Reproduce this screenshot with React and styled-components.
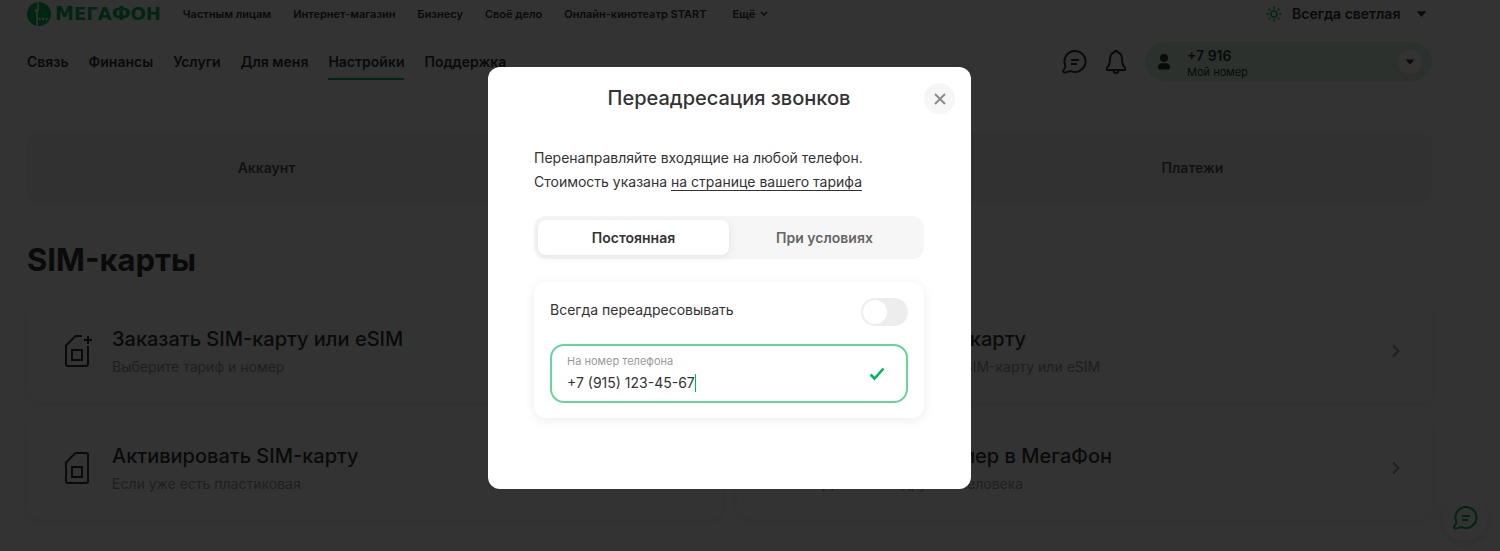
import React, { useState } from "react";
import styled, { createGlobalStyle } from "styled-components";

const topLinks = [
    "Частным лицам",
    "Интернет-магазин",
    "Бизнесу",
    "Своё дело",
    "Онлайн-кинотеатр START",
];

const navLinks = [
    "Связь",
    "Финансы",
    "Услуги",
    "Для меня",
    "Настройки",
    "Поддержка",
];

const sections = ["Аккаунт", "Платежи"];

const simCards = [
    {
        title: "Заказать SIM-карту или eSIM",
        text: "Выберите тариф и номер",
        plus: true,
    },
    {
        title: "Заменить SIM-карту",
        text: "Заменим на другую SIM-карту или eSIM",
    },
    {
        title: "Активировать SIM-карту",
        text: "Если уже есть пластиковая",
    },
    {
        title: "Перенести номер в МегаФон",
        text: "Для себя и другого человека",
    },
];

const LogoMark = () => (
    <svg width="24" height="24" viewBox="0 0 24 24" aria-hidden="true">
        <circle cx="12" cy="12" r="12" fill="#00b956" />
        <path
            d="M11 0v7.500c0 1.500-1 2-1 3.500V24"
            fill="none"
            stroke="#fff"
            strokeWidth="1.500"
        />
        <circle cx="9" cy="8.500" r="1.500" fill="#fff" />
        <circle cx="12.500" cy="17" r="1.200" fill="#fff" />
        <circle cx="16" cy="17" r="1.200" fill="#fff" />
        <circle cx="19.500" cy="17" r="1.200" fill="#fff" />
    </svg>
);

const ChatIcon = () => (
    <svg
        width="26"
        height="26"
        viewBox="0 0 26 26"
        fill="none"
        stroke="currentColor"
        strokeWidth="2"
        strokeLinejoin="round"
        aria-hidden="true"
    >
        <path d="M4.200 16.300c.6 2-.3 3-1.300 4.300-1.400 1.700-.9 3.100 1.100 3 2-.1 3.300-1.500 5.800-1.500A10.500 10.500 0 1 0 4.200 16.300Z" />
        <path d="M10 11h8M10 15h6" />
    </svg>
);

const BellIcon = () => (
    <svg
        width="22"
        height="26"
        viewBox="0 0 22 26"
        fill="none"
        stroke="currentColor"
        strokeWidth="2"
        strokeLinejoin="round"
        aria-hidden="true"
    >
        <path d="M9.500 3.200a1.500 1.500 0 0 1 3 0c3.200 1 4.500 3.500 4.500 6.800 0 5 .8 7 3 8.500V21H2v-2.500C4.200 17 5 15 5 10c0-3.300 1.300-5.800 4.500-6.800Z" />
        <path d="M8.500 21.500a2.500 2.500 0 0 0 5 0" />
    </svg>
);

const UserIcon = () => (
    <svg width="12" height="16" viewBox="0 0 12 16" aria-hidden="true">
        <circle cx="6" cy="4" r="4" fill="#333" />
        <path
            d="M3.500 9.200h5C10.500 9.200 12 10.800 12 13c0 2-.6 2.500-2 2.500H2c-1.400 0-2-.5-2-2.500 0-2.200 1.500-3.800 3.500-3.800Z"
            fill="#333"
        />
    </svg>
);

const SunIcon = () => (
    <svg
        width="16"
        height="16"
        viewBox="0 0 16 16"
        fill="none"
        stroke="#00b956"
        strokeWidth="1.500"
        aria-hidden="true"
    >
        <circle cx="8" cy="8" r="3" />
        <path
            d="M8 1v1.500M8 13.500V15M1 8h1.500M13.500 8H15M3 3l1 1M12 12l1 1M3 13l1-1M12 4l1-1"
            strokeLinecap="round"
        />
    </svg>
);

const TriangleIcon = ({ width = 9 }) => (
    <svg width={width} height="6" viewBox="0 0 10 6" aria-hidden="true">
        <path d="M1 0h8c.7 0 1 .6.500 1.100L5.700 5.400c-.4.500-1 .5-1.400 0L.5 1.100C0 .6.300 0 1 0Z" fill="#333" />
    </svg>
);

const SimIcon = ({ plus }) => (
    <svg
        width="30"
        height="34"
        viewBox="0 0 30 34"
        fill="none"
        stroke="#333"
        strokeWidth="2"
        strokeLinejoin="round"
        aria-hidden="true"
    >
        {plus ? (
            <>
                <path d="M18 2h-6.500L2 11.500V30a2 2 0 0 0 2 2h18a2 2 0 0 0 2-2V12" />
                <path d="M20 6h8M24 2v8" />
            </>
        ) : (
            <path d="M11.500 2H22a2 2 0 0 1 2 2v26a2 2 0 0 1-2 2H4a2 2 0 0 1-2-2V11.500Z" />
        )}
        <path d="M8 16h10v10H8Z" strokeLinejoin="miter" />
    </svg>
);

const App = () => {
    const [mode, setMode] = useState("always");
    const [enabled, setEnabled] = useState(false);
    const [phone, setPhone] = useState("+7 (915) 123-45-67");

    return (
        <>
            <GlobalStyle />
            <Page>
                <TopBar>
                    <Logo href="#">
                        <LogoMark />
                        <LogoText>
                            М<small>ЕГА</small>Ф<small>ОН</small>
                        </LogoText>
                    </Logo>
                    <TopMenu>
                        {topLinks.map((link) => (
                            <a key={link} href="#">
                                {link}
                            </a>
                        ))}
                        <MoreButton type="button">
                            Ещё
                            <svg width="8" height="5" viewBox="0 0 8 5" aria-hidden="true">
                                <path d="m1 1 3 3 3-3" fill="none" stroke="#333" strokeWidth="1.500" />
                            </svg>
                        </MoreButton>
                    </TopMenu>
                    <ThemePicker>
                        <SunIcon />
                        <ThemeSelect aria-label="Тема">
                            <option>Всегда светлая</option>
                        </ThemeSelect>
                        <TriangleIcon />
                    </ThemePicker>
                </TopBar>
                <NavBar>
                    <Nav>
                        {navLinks.map((link) => (
                            <NavLink key={link} href="#" $active={link === "Настройки"}>
                                {link}
                            </NavLink>
                        ))}
                    </Nav>
                    <IconButton type="button" aria-label="Чат">
                        <ChatIcon />
                    </IconButton>
                    <IconButton type="button" aria-label="Уведомления">
                        <BellIcon />
                    </IconButton>
                    <Account type="button">
                        <UserIcon />
                        <AccountText>
                            <AccountNumber>+7 916</AccountNumber>
                            <AccountName>Мой номер</AccountName>
                        </AccountText>
                        <AccountArrow>
                            <TriangleIcon width={8} />
                        </AccountArrow>
                    </Account>
                </NavBar>
                <Sections>
                    {sections.map((section) => (
                        <SectionTab key={section} href="#">
                            {section}
                        </SectionTab>
                    ))}
                </Sections>
                <Heading>SIM-карты</Heading>
                <Cards>
                    {simCards.map((card) => (
                        <Card key={card.title} href="#">
                            <SimIcon plus={card.plus} />
                            <CardBody>
                                <CardTitle>{card.title}</CardTitle>
                                <CardText>{card.text}</CardText>
                            </CardBody>
                            <svg width="8" height="14" viewBox="0 0 8 14" aria-hidden="true">
                                <path d="m1 1.500 5.500 5.500L1 12.500" fill="none" stroke="#999" strokeWidth="2" />
                            </svg>
                        </Card>
                    ))}
                </Cards>
            </Page>
            <ChatButton type="button" aria-label="Написать в чат">
                <ChatIcon />
            </ChatButton>
            <Overlay>
                <Modal role="dialog" aria-modal="true" aria-labelledby="modal-title">
                    <ModalHeader>
                        <ModalTitle id="modal-title">Переадресация звонков</ModalTitle>
                        <CloseButton type="button" aria-label="Закрыть">
                            <svg width="12" height="12" viewBox="0 0 12 12" aria-hidden="true">
                                <path d="m1 1 10 10M11 1 1 11" stroke="#8c8c8c" strokeWidth="2" />
                            </svg>
                        </CloseButton>
                    </ModalHeader>
                    <Description>
                        Перенаправляйте входящие на любой телефон.
                        <br />
                        Стоимость указана <a href="#">на странице вашего тарифа</a>
                    </Description>
                    <Segments>
                        <Segment
                            type="button"
                            $active={mode === "always"}
                            onClick={() => setMode("always")}
                        >
                            Постоянная
                        </Segment>
                        <Segment
                            type="button"
                            $active={mode === "conditional"}
                            onClick={() => setMode("conditional")}
                        >
                            При условиях
                        </Segment>
                    </Segments>
                    <Panel>
                        <SwitchRow>
                            <label htmlFor="forwarding">Всегда переадресовывать</label>
                            <Switch
                                id="forwarding"
                                type="checkbox"
                                checked={enabled}
                                onChange={(e) => setEnabled(e.target.checked)}
                            />
                        </SwitchRow>
                        <Field>
                            <FieldBody>
                                <FieldLabel htmlFor="phone">На номер телефона</FieldLabel>
                                <FieldValue>
                                    <PhoneInput
                                        id="phone"
                                        type="tel"
                                        value={phone}
                                        onChange={(e) => setPhone(e.target.value)}
                                    />
                                    <Caret />
                                </FieldValue>
                            </FieldBody>
                            <svg width="16" height="14" viewBox="0 0 16 14" aria-hidden="true">
                                <path d="m1.500 7.500 4 4L14.500 1.500" fill="none" stroke="#00b956" strokeWidth="2.600" />
                            </svg>
                        </Field>
                    </Panel>
                </Modal>
            </Overlay>
        </>
    );
};

const GlobalStyle = createGlobalStyle`
    * {
        box-sizing: border-box;
    }

    body {
        margin: 0;
        background-color: #ffffff;
        color: #333333;
        font-family: Inter, "Liberation Sans", sans-serif;
        font-size: 14px;
    }

    button,
    input,
    select {
        font: inherit;
        color: inherit;
    }

    button {
        border: none;
        background: none;
        padding: 0;
        cursor: pointer;
    }

    a {
        color: inherit;
        text-decoration: none;
    }
`;

const Page = styled.div`
    padding: 0 68px 31px 27px;
`;

const TopBar = styled.header`
    display: flex;
    align-items: center;
    height: 27px;
`;

const Logo = styled.a`
    display: flex;
    align-items: center;
    column-gap: 4px;
    margin-right: 22px;
`;

const LogoText = styled.span`
    font-family: "DejaVu Sans", sans-serif;
    font-size: 19px;
    font-weight: 700;
    line-height: 24px;
    color: #00b956;

    small {
        font-size: 18px;
    }
`;

const TopMenu = styled.nav`
    display: flex;
    align-items: center;
    column-gap: 22px;
    flex: 1;
    font-size: 11px;
    font-weight: 600;
    line-height: 16px;
    white-space: nowrap;
`;

const MoreButton = styled.button`
    display: flex;
    align-items: center;
    column-gap: 5px;
    margin-left: 4px;
`;

const ThemePicker = styled.div`
    display: flex;
    align-items: center;
    padding-right: 6px;
`;

const ThemeSelect = styled.select`
    appearance: none;
    border: none;
    background: none;
    padding: 0 16px 0 10px;
    font-size: 14px;
    font-weight: 600;
    line-height: 20px;
`;

const NavBar = styled.div`
    display: flex;
    align-items: center;
    height: 39px;
    margin-top: 15px;
`;

const Nav = styled.nav`
    display: flex;
    column-gap: 20px;
    flex: 1;
`;

const NavLink = styled.a`
    padding: 6px 0;
    border: solid transparent;
    border-width: 2px 0;
    border-bottom-color: ${(props) => (props.$active ? "#00b956" : "transparent")};
    font-size: 14px;
    font-weight: 600;
    line-height: 20px;
`;

const IconButton = styled.button`
    display: flex;
    margin-right: 18px;
`;

const Account = styled.button`
    display: flex;
    align-items: center;
    width: 287px;
    height: 39px;
    padding: 0 10px 0 13px;
    border-radius: 20px;
    background-color: #d9f5e5;
    text-align: left;
`;

const AccountText = styled.span`
    display: flex;
    flex-direction: column;
    flex: 1;
    margin-left: 17px;
    padding-top: 4px;
`;

const AccountNumber = styled.span`
    font-size: 14px;
    font-weight: 600;
    line-height: 16px;
`;

const AccountName = styled.span`
    font-size: 11px;
    line-height: 16px;
`;

const AccountArrow = styled.span`
    display: flex;
    align-items: center;
    justify-content: center;
    width: 24px;
    height: 24px;
    border-radius: 50%;
    background-color: #ffffff;
`;

const Sections = styled.nav`
    display: grid;
    grid-template-columns: repeat(3, 1fr);
    margin-top: 51px;
    padding: 8px;
    border-radius: 12px;
    background-color: #f6f6f6;
`;

const SectionTab = styled.a`
    font-size: 14px;
    font-weight: 600;
    line-height: 55px;
    text-align: center;
    color: #595959;

    &:last-child {
        grid-column: 3;
    }
`;

const Heading = styled.h2`
    margin: 38px 0 21px;
    font-size: 31px;
    font-weight: 700;
    line-height: 38px;
`;

const Cards = styled.div`
    display: grid;
    grid-template-columns: repeat(2, 1fr);
    gap: 15px;
`;

const Card = styled.a`
    display: flex;
    align-items: center;
    height: 102px;
    padding: 0 32px 0 37px;
    border-radius: 12px;
    background-color: #ffffff;
    box-shadow: 0 2px 12px #00000014;
`;

const CardBody = styled.div`
    flex: 1;
    margin-left: 18px;
    padding-top: 2px;
`;

const CardTitle = styled.h3`
    margin: 0;
    font-size: 20px;
    font-weight: 500;
    line-height: 28px;
`;

const CardText = styled.p`
    margin: 2px 0 0;
    font-size: 14px;
    line-height: 24px;
    color: #999999;
`;

const ChatButton = styled.button`
    position: fixed;
    right: 12px;
    bottom: 10px;
    display: flex;
    align-items: center;
    justify-content: center;
    width: 46px;
    height: 46px;
    border-radius: 50%;
    background-color: #ffffff;
    box-shadow: 0 2px 8px #00000020;
    color: #00b956;
`;

const Overlay = styled.div`
    position: fixed;
    inset: 0;
    display: flex;
    align-items: flex-start;
    justify-content: center;
    padding: 67px 68px 0 27px;
    overflow-y: auto;
    background-color: rgba(0, 0, 0, 0.8);
`;

const Modal = styled.div`
    width: 483px;
    padding: 16px 47px 71px 46px;
    border-radius: 12px;
    background-color: #ffffff;
`;

const ModalHeader = styled.div`
    position: relative;
    display: flex;
    justify-content: center;
`;

const ModalTitle = styled.h1`
    margin: 0;
    font-size: 20px;
    font-weight: 500;
    line-height: 31px;
`;

const CloseButton = styled.button`
    position: absolute;
    top: 0;
    right: -31px;
    display: flex;
    align-items: center;
    justify-content: center;
    width: 31px;
    height: 31px;
    border-radius: 50%;
    background-color: #f6f6f6;
`;

const Description = styled.p`
    margin: 32px 0 22px;
    font-size: 14px;
    line-height: 24px;
    white-space: nowrap;

    a {
        border-bottom: 1px solid #333333;
    }
`;

const Segments = styled.div`
    display: grid;
    grid-template-columns: repeat(2, 1fr);
    padding: 4px;
    border-radius: 12px;
    background-color: #f6f6f6;
`;

const Segment = styled.button`
    border-radius: 8px;
    background-color: ${(props) => (props.$active ? "#ffffff" : "transparent")};
    box-shadow: ${(props) => (props.$active ? "0 2px 8px #00000014" : "none")};
    color: ${(props) => (props.$active ? "#333333" : "#666666")};
    font-size: 14px;
    font-weight: 600;
    line-height: 35px;
`;

const Panel = styled.div`
    margin-top: 23px;
    padding: 16px 16px 15px;
    border-radius: 12px;
    box-shadow: 0 2px 12px #00000014;
`;

const SwitchRow = styled.div`
    display: flex;
    align-items: flex-start;
    justify-content: space-between;
    margin-bottom: 18px;
    font-size: 14px;
    line-height: 24px;
`;

const Switch = styled.input`
    appearance: none;
    display: flex;
    width: 47px;
    height: 28px;
    margin: 0;
    padding: 2px;
    border-radius: 14px;
    background-color: ${(props) => (props.checked ? "#00b956" : "#ededed")};
    justify-content: ${(props) => (props.checked ? "flex-end" : "flex-start")};
    cursor: pointer;

    &::before {
        content: "";
        width: 24px;
        height: 24px;
        border-radius: 50%;
        background-color: #ffffff;
    }
`;

const Field = styled.div`
    display: flex;
    align-items: center;
    justify-content: space-between;
    height: 59px;
    padding: 0 21px 0 15px;
    border: 2px solid #66d59a;
    border-radius: 14px;
`;

const FieldBody = styled.div`
    display: flex;
    flex-direction: column;
`;

const FieldLabel = styled.label`
    font-size: 11px;
    line-height: 18px;
    color: #999999;
`;

const FieldValue = styled.div`
    display: flex;
    align-items: center;
    height: 26px;
`;

const PhoneInput = styled.input`
    field-sizing: content;
    padding: 0;
    border: none;
    outline: none;
    background: none;
    font-size: 14px;
    line-height: 24px;
`;

const Caret = styled.span`
    width: 1px;
    height: 18px;
    background-color: #00b956;
`;

export default App;
